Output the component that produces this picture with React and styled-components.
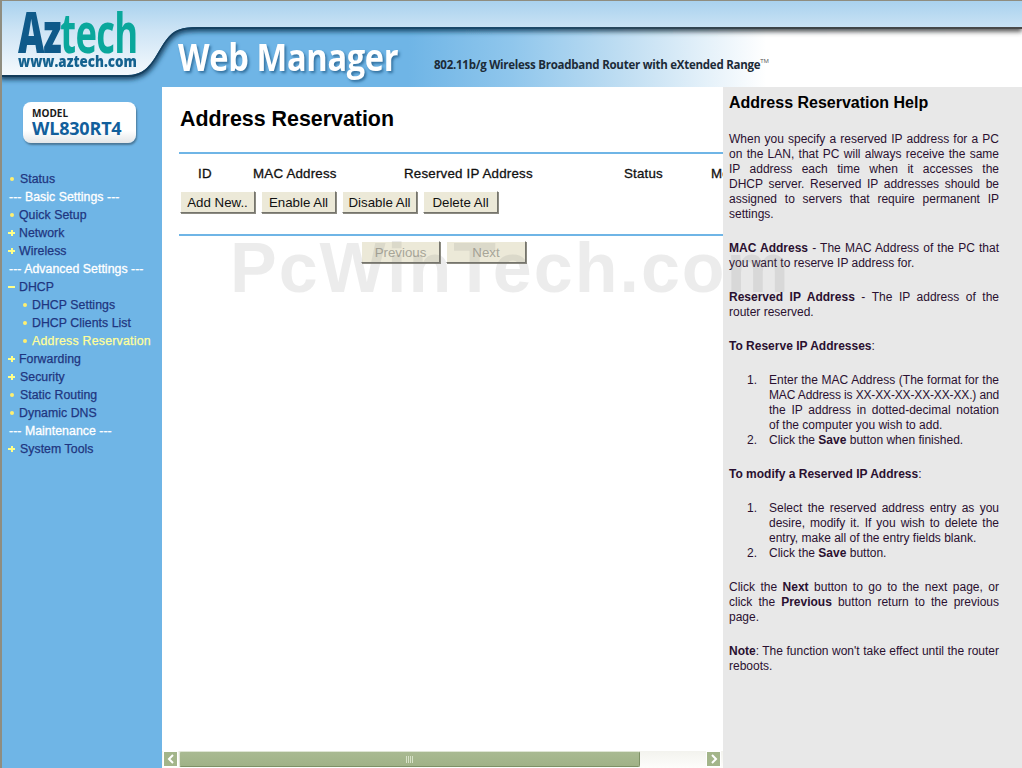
import React from "react";
import styled, { createGlobalStyle } from "styled-components";

const Global = createGlobalStyle`
  html, body { margin: 0; padding: 0; height: 100%; overflow: hidden; background: #6fb5e6; }
  #root { height: 100%; }
`;

const Page = styled.div`
  position: relative;
  width: 1022px;
  height: 768px;
  overflow: hidden;
  font-family: "Liberation Sans", Arial, sans-serif;
  display: flex;
  flex-direction: column;
  border-left: 2px solid #8f8d80;
  border-top: 1px solid #8f8d80;
  box-sizing: border-box;
`;

const Header = styled.header`
  position: relative;
  height: 86px;
  flex: none;
  display: flex;
  align-items: flex-start;
`;

const HeaderArt = styled.svg`
  position: absolute;
  left: -2px;
  top: -1px;
  width: 1022px;
  height: 87px;
`;

const LogoBlock = styled.div`
  position: relative;
  width: 172px;
  margin-left: 16px;
  padding-top: 8px;
  flex: none;
`;

const LogoWord = styled.div`
  font-family: "Open Sans", "Liberation Sans", sans-serif;
  font-weight: 700;
  font-size: 56px;
  line-height: 44px;
  height: 44px;
  letter-spacing: -1px;
  transform: scaleX(0.65);
  transform-origin: left;
  color: #0f5f8f;
  white-space: nowrap;
  & b { font-weight: 800; color: #0f5a8a; letter-spacing: -2px; }
  & span { color: #0aa79c; font-weight: 700; }
`;

const LogoUrl = styled.div`
  font-family: "Open Sans", sans-serif;
  font-weight: 800;
  font-size: 15px;
  line-height: 15px;
  color: #14628f;
  white-space: nowrap;
  transform: scaleX(0.89);
  transform-origin: left;
  margin-top: 1px;
`;

const Banner = styled.div`
  position: relative;
  display: flex;
  align-items: flex-start;
  padding-top: 33px;
`;

const Title = styled.div`
  font-family: "Open Sans", sans-serif;
  font-weight: 700;
  font-size: 37px;
  line-height: 46px;
  letter-spacing: -0.4px;
  color: #fff;
  text-shadow: 2px 2px 3px #33719f;
  width: 256px;
  margin-left: -12px;
  white-space: nowrap;
  transform: scaleX(0.882);
  transform-origin: left;
`;

const Tagline = styled.div`
  font-family: "Open Sans", sans-serif;
  font-weight: 700;
  font-size: 11.5px;
  line-height: 16px;
  letter-spacing: -0.25px;
  margin-top: 23px;
  color: #1c2b38;
  white-space: nowrap;
  & sup { font-size: 6px; font-weight: 400; color: #555; vertical-align: 6px; line-height: 0; }
`;

const Body = styled.div`
  flex: 1;
  min-height: 0;
  display: flex;
`;

const Sidebar = styled.nav`
  width: 160px;
  flex: none;
  background: #6fb5e6;
  display: flex;
  flex-direction: column;
`;

const ModelBadge = styled.div`
  width: 113px;
  height: 41px;
  margin: 15px 0 0 21px;
  box-sizing: border-box;
  padding: 6px 0 0 9px;
  border-radius: 8px;
  background: linear-gradient(#fff 70%, #e3e6e8);
  box-shadow: 1px 2px 2px #4a7898;
`;

const ModelLabel = styled.div`
  font-family: "Open Sans", sans-serif;
  font-weight: 700;
  font-size: 10px;
  line-height: 11px;
  color: #1a1a1a;
`;

const ModelName = styled.div`
  font-family: "Open Sans", sans-serif;
  font-weight: 700;
  font-size: 18px;
  line-height: 18px;
  letter-spacing: -0.2px;
  color: #125f9c;
`;

const Menu = styled.ul`
  list-style: none;
  margin: 27px 0 0;
  padding: 0;
`;

const Item = styled.li`
  height: 18px;
  line-height: 18px;
  font-size: 12.3px;
  white-space: nowrap;
  display: flex;
  align-items: center;
  padding-left: ${p => (p.$sub ? 18 : 5)}px;
  color: ${p => (p.$active ? "#ffff99" : "#1f3580")};
  letter-spacing: ${p => (p.$active ? 0.25 : 0.05)}px;
  -webkit-text-stroke: 0.25px currentColor;
`;

const Heading = styled.li`
  height: 18px;
  line-height: 18px;
  font-size: 12.3px;
  color: #fff;
  padding-left: 7px;
  white-space: nowrap;
  letter-spacing: 0.05px;
  -webkit-text-stroke: 0.3px currentColor;
`;

const Marker = styled.span`
  flex: none;
  width: ${p => p.$w}px;
  height: 18px;
  position: relative;
`;

const Dot = styled.i`
  position: absolute;
  left: 3px;
  top: 7px;
  width: 4px;
  height: 4px;
  border-radius: 50%;
  background: #ffef70;
`;

const PlusBar = styled.i`
  position: absolute;
  left: 1px;
  top: 8px;
  width: 7px;
  height: 2px;
  background: #ffff88;
`;

const PlusStem = styled.i`
  position: absolute;
  left: 3.5px;
  top: 6px;
  width: 2px;
  height: 6px;
  background: #ffff88;
`;

const Main = styled.main`
  width: 561px;
  flex: none;
  background: #fff;
  display: flex;
  flex-direction: column;
  overflow: hidden;
`;

const Content = styled.div`
  flex: 1;
  min-height: 0;
  padding: 0 0 0 17px;
  overflow: hidden;
`;

const PageTitle = styled.h1`
  margin: 19px 0 20px 1px;
  height: 26px;
  font-size: 21.4px;
  line-height: 26px;
  font-weight: 700;
  color: #000;
  white-space: nowrap;
`;

const Rule = styled.div`
  height: 2px;
  width: 560px;
  background: #6fb5e6;
`;

const Columns = styled.div`
  display: flex;
  height: 37px;
  padding-top: 1px;
  box-sizing: border-box;
  align-items: center;
  font-size: 13.33px;
  letter-spacing: 0.2px;
  color: #111;
  white-space: nowrap;
  -webkit-text-stroke: 0.3px currentColor;
`;

const Col = styled.span`
  flex: none;
  width: ${p => p.$w}px;
  padding-left: ${p => p.$pl || 0}px;
  box-sizing: border-box;
`;

const ButtonRow = styled.div`
  display: flex;
  gap: 6px;
  height: 22px;
  margin-bottom: 21px;
  margin-left: 1px;
`;

const Btn = styled.button`
  width: ${p => p.$w || 70}px;
  height: 22px;
  padding: 0;
  border: 1px solid;
  border-color: #fff #75746c #75746c #fff;
  box-shadow: 1px 1px 0 #8c8b82;
  background: #ece9d8;
  font-family: "Liberation Sans", Arial, sans-serif;
  font-size: 13.3px;
  color: ${p => (p.disabled ? "#a8a698" : "#111")};
`;

const Pager = styled.div`
  display: flex;
  gap: 6px;
  margin: 5px 0 0 182px;
`;

const ScrollBar = styled.div`
  height: 17px;
  flex: none;
  display: flex;
  background: linear-gradient(#f3f3ee, #fdfdfb);
  padding: 0 2px 1px 1px;
  box-sizing: border-box;
  align-items: stretch;
`;

const ScrollBtn = styled.div`
  width: 15px;
  box-sizing: border-box;
  flex: none;
  background: #a3b58a;
  border: 1px solid #fff;
  display: flex;
  align-items: center;
  justify-content: center;
`;

const Thumb = styled.div`
  width: 461px;
  box-sizing: border-box;
  margin-left: 1px;
  flex: none;
  background: linear-gradient(#a9ba92, #a0b287);
  border: 1px solid;
  border-color: #dfe6d5 #7e9166 #7e9166 #dfe6d5;
  border-radius: 2px;
  display: flex;
  align-items: center;
  justify-content: center;
`;

const Grip = styled.div`
  width: 8px;
  height: 7px;
  background: repeating-linear-gradient(90deg, #d8e2c8 0 1px, transparent 1px 2px);
`;

const Track = styled.div`
  flex: 1;
`;

const Help = styled.aside`
  flex: 1;
  background: #e8e8e8;
  padding: 6px 23px 0 6px;
  font-size: 12px;
  line-height: 15px;
  color: #2a1030;
  overflow: hidden;
`;

const HelpTitle = styled.h2`
  margin: 0 0 20px;
  font-size: 16px;
  line-height: 19px;
  font-weight: 700;
  color: #000;
`;

const P = styled.div`
  margin: 0 0 19px;
`;

const Line = styled.span`
  display: block;
  white-space: nowrap;
  text-align: justify;
  text-align-last: ${p => (p.$end ? "left" : "justify")};
  ${p => p.$tight && "letter-spacing: -0.15px;"}
`;

const Steps = styled.ol`
  list-style: none;
  counter-reset: step;
  margin: 0 0 19px;
  padding-left: 40px;
`;

const Step = styled.li`
  position: relative;
  counter-increment: step;
  &::before {
    content: counter(step) ".";
    position: absolute;
    left: -22px;
  }
`;

const Watermark = styled.div`
  position: absolute;
  left: 228px;
  top: 232px;
  font-size: 70px;
  line-height: 70px;
  font-weight: 700;
  letter-spacing: 2px;
  color: rgba(120, 120, 120, 0.14);
  white-space: nowrap;
  pointer-events: none;
`;

const Mark = ({ type, w = 14 }) => (
  <Marker $w={w}>
    {type === "dot" && <Dot />}
    {type !== "dot" && <PlusBar />}
    {type === "plus" && <PlusStem />}
  </Marker>
);

const Lines = ({ items }) =>
  items.map((l, i) => (
    <Line key={i} $end={i === items.length - 1} $tight={l.tight}>
      {l.c || l}
    </Line>
  ));

const menu = [
  { t: "Status", m: "dot", w: 13 },
  { t: "--- Basic Settings ---", h: 1 },
  { t: "Quick Setup", m: "dot", w: 12 },
  { t: "Network", m: "plus", w: 12 },
  { t: "Wireless", m: "plus", w: 12 },
  { t: "--- Advanced Settings ---", h: 1 },
  { t: "DHCP", m: "minus", w: 12 },
  { t: "DHCP Settings", m: "dot", w: 12, sub: 1 },
  { t: "DHCP Clients List", m: "dot", w: 12, sub: 1 },
  { t: "Address Reservation", m: "dot", w: 12, sub: 1, a: 1 },
  { t: "Forwarding", m: "plus", w: 12 },
  { t: "Security", m: "plus", w: 13 },
  { t: "Static Routing", m: "dot", w: 13 },
  { t: "Dynamic DNS", m: "dot", w: 12 },
  { t: "--- Maintenance ---", h: 1 },
  { t: "System Tools", m: "plus", w: 13 },
];

export default function App() {
  return (
    <Page>
      <Global />
      <Header>
        <HeaderArt viewBox="0 0 1022 87" aria-hidden="true">
          <defs>
            <linearGradient id="sky" x1="0" y1="0" x2="0" y2="1">
              <stop offset="0" stopColor="#a8d1ee" />
              <stop offset="0.35" stopColor="#cde4f5" />
              <stop offset="1" stopColor="#ffffff" />
            </linearGradient>
            <linearGradient id="banner" x1="0" y1="0" x2="1" y2="0">
              <stop offset="0" stopColor="#6fb5e6" />
              <stop offset="0.4" stopColor="#6fb5e6" />
              <stop offset="0.5" stopColor="#8fc6ec" />
              <stop offset="0.62" stopColor="#c4e0f3" />
              <stop offset="0.75" stopColor="#ffffff" />
              <stop offset="1" stopColor="#ffffff" />
            </linearGradient>
            <linearGradient id="edge" gradientUnits="userSpaceOnUse" x1="0" y1="0" x2="1022" y2="0">
              <stop offset="0" stopColor="#123c5a" />
              <stop offset="0.5" stopColor="#1a4a6c" />
              <stop offset="0.75" stopColor="#3b4347" />
              <stop offset="1" stopColor="#4a4a4a" />
            </linearGradient>
            <filter id="soft" x="-5%" y="-40%" width="110%" height="200%">
              <feGaussianBlur stdDeviation="2.4" />
            </filter>
            <clipPath id="below">
              <path d="M0 75 L128 75 C150 75 155 55 166 40 C174 29 182 27 198 27 L1022 27 L1022 87 L0 87 Z" />
            </clipPath>
          </defs>
          <rect width="1022" height="87" fill="url(#sky)" />
          <path d="M0 75 L128 75 C150 75 155 55 166 40 C174 29 182 27 198 27 L1022 27 L1022 87 L0 87 Z" fill="url(#banner)" />
          <g clipPath="url(#below)">
            <path d="M0 76 L128 76 C150 76 155 56 166 41 C174 30 182 28 198 28 L1022 28" fill="none" stroke="url(#edge)" strokeWidth="7" filter="url(#soft)" />
            <path d="M0 76 L128 76 C150 76 155 56 166 41 C174 30 182 28 198 28 L1022 28" fill="none" stroke="url(#edge)" strokeWidth="2" />
          </g>
        </HeaderArt>
        <LogoBlock>
          <LogoWord><b>Az</b><span>tech</span></LogoWord>
          <LogoUrl>www.aztech.com</LogoUrl>
        </LogoBlock>
        <Banner>
          <Title>Web Manager</Title>
          <Tagline>802.11b/g Wireless Broadband Router with eXtended Range<sup>TM</sup></Tagline>
        </Banner>
      </Header>
      <Body>
        <Sidebar>
          <ModelBadge>
            <ModelLabel>MODEL</ModelLabel>
            <ModelName>WL830RT4</ModelName>
          </ModelBadge>
          <Menu>
            {menu.map(i =>
              i.h ? (
                <Heading key={i.t}>{i.t}</Heading>
              ) : (
                <Item key={i.t} $sub={i.sub} $active={i.a}>
                  <Mark type={i.m} w={i.w} />
                  {i.t}
                </Item>
              )
            )}
          </Menu>
        </Sidebar>
        <Main>
          <Content>
            <PageTitle>Address Reservation</PageTitle>
            <Rule />
            <Columns>
              <Col $w={74} $pl={19}>ID</Col>
              <Col $w={151}>MAC Address</Col>
              <Col $w={220}>Reserved IP Address</Col>
              <Col $w={87}>Status</Col>
              <Col $w={30}>Modify</Col>
            </Columns>
            <ButtonRow>
              <Btn $w={75}>Add New..</Btn>
              <Btn $w={75}>Enable All</Btn>
              <Btn $w={75}>Disable All</Btn>
              <Btn $w={75}>Delete All</Btn>
            </ButtonRow>
            <Rule />
            <Pager>
              <Btn $w={79} disabled>Previous</Btn>
              <Btn $w={80} disabled>Next</Btn>
            </Pager>
          </Content>
          <ScrollBar>
            <ScrollBtn>
              <svg width="8" height="10" viewBox="0 0 8 10"><path d="M6 1 L2 5 L6 9" fill="none" stroke="#fff" strokeWidth="2" /></svg>
            </ScrollBtn>
            <Thumb><Grip /></Thumb>
            <Track />
            <ScrollBtn>
              <svg width="8" height="10" viewBox="0 0 8 10"><path d="M2 1 L6 5 L2 9" fill="none" stroke="#fff" strokeWidth="2" /></svg>
            </ScrollBtn>
          </ScrollBar>
        </Main>
        <Help>
          <HelpTitle>Address Reservation Help</HelpTitle>
          <P><Lines items={[
            "When you specify a reserved IP address for a PC",
            "on the LAN, that PC will always receive the same",
            "IP address each time when it accesses the",
            "DHCP server. Reserved IP addresses should be",
            "assigned to servers that require permanent IP",
            "settings.",
          ]} /></P>
          <P><Lines items={[
            <><b>MAC Address</b> - The MAC Address of the PC that</>,
            "you want to reserve IP address for.",
          ]} /></P>
          <P><Lines items={[
            <><b>Reserved IP Address</b> - The IP address of the</>,
            "router reserved.",
          ]} /></P>
          <P><b>To Reserve IP Addresses</b>:</P>
          <Steps>
            <Step><Lines items={[
              "Enter the MAC Address (The format for the",
              { c: "MAC Address is XX-XX-XX-XX-XX-XX.) and", tight: true },
              "the IP address in dotted-decimal notation",
              "of the computer you wish to add.",
            ]} /></Step>
            <Step>Click the <b>Save</b> button when finished.</Step>
          </Steps>
          <P><b>To modify a Reserved IP Address</b>:</P>
          <Steps>
            <Step><Lines items={[
              "Select the reserved address entry as you",
              "desire, modify it. If you wish to delete the",
              "entry, make all of the entry fields blank.",
            ]} /></Step>
            <Step>Click the <b>Save</b> button.</Step>
          </Steps>
          <P><Lines items={[
            <>Click the <b>Next</b> button to go to the next page, or</>,
            <>click the <b>Previous</b> button return to the previous</>,
            "page.",
          ]} /></P>
          <P><Lines items={[
            <><b>Note</b>: The function won't take effect until the router</>,
            "reboots.",
          ]} /></P>
        </Help>
      </Body>
      <Watermark>PcWinTech.com</Watermark>
    </Page>
  );
}
